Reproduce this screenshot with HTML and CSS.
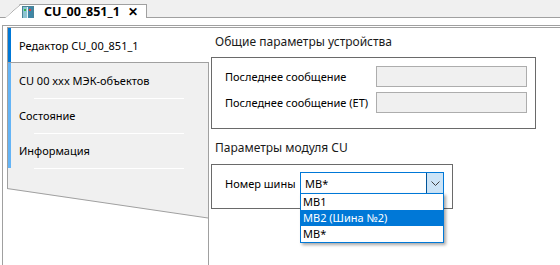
FILE: index.html
```html
<!DOCTYPE html>
<html>
<head>
<meta charset="utf-8">
<link rel="stylesheet" href="styles.css">
</head>
<body>
<div class="app">
  <div class="tabstrip">
    <div class="tab">
      <svg class="tab-icon" width="12" height="13" viewBox="0 0 12 13">
        <rect x="0" y="0" width="6" height="13" fill="#8cc4d2"/>
        <rect x="6" y="0" width="6" height="13" fill="#3f86a6"/>
        <rect x="5" y="0" width="1" height="13" fill="#e6f4f8"/>
        <rect x="0.5" y="0.5" width="11" height="12" fill="none" stroke="#4a8296"/>
        <rect x="2" y="3" width="2" height="2" fill="#2fb84a"/>
        <rect x="7" y="3" width="2" height="2" fill="#e23c3c"/>
      </svg>
      <span class="tab-title">CU_00_851_1</span>
      <span class="tab-close">✕</span>
    </div>
  </div>
  <div class="frame">
    <div class="panel">
      <div class="nav">
        <div class="nav-item selected"><span>Редактор CU_00_851_1</span></div>
        <div class="nav-item"><span>CU 00 xxx МЭК-объектов</span></div>
        <div class="nav-item"><span>Состояние</span></div>
        <div class="nav-item"><span>Информация</span></div>
        <div class="nav-tail"></div>
        <svg class="nav-slant" width="202" height="41" viewBox="0 0 202 41"><polygon points="0,0 201,0 201,40 0,11" fill="#f0f0f0"/><line x1="0.5" y1="0" x2="0.5" y2="11" stroke="#a0a0a0"/><line x1="0" y1="10.5" x2="201" y2="40" stroke="#a0a0a0"/><line x1="201.5" y1="0" x2="201.5" y2="41" stroke="#a0a0a0"/></svg>
        <div class="nav-fill"></div>
      </div>
      <div class="content">
        <div class="section-title">Общие параметры устройства</div>
        <div class="group group-general">
          <div class="row"><span class="label">Последнее сообщение</span><div class="field"></div></div>
          <div class="row"><span class="label">Последнее сообщение (ET)</span><div class="field"></div></div>
        </div>
        <div class="section-title second">Параметры модуля CU</div>
        <div class="group group-cu">
          <div class="row">
            <span class="label">Номер шины</span>
            <div class="combo-wrap">
              <div class="combo">
                <span class="combo-value">MB*</span>
                <div class="combo-btn"><svg width="9" height="5" viewBox="0 0 9 5"><polyline points="0.5,0.5 4.5,4.5 8.5,0.5" fill="none" stroke="#404040" stroke-width="1"/></svg></div>
              </div>
              <div class="dropdown">
                <div class="opt">MB1</div>
                <div class="opt active">MB2 (Шина №2)</div>
                <div class="opt">MB*</div>
              </div>
            </div>
          </div>
        </div>
      </div>
    </div>
  </div>
</div>
</body>
</html>
```
FILE: styles.css
```css
* { box-sizing: border-box; }
html, body { margin: 0; padding: 0; background: #fff; }
body {
  font-family: "Noto Sans", "Open Sans", sans-serif;
  font-size: 11px;
  color: #000;
  width: 560px;
  height: 265px;
  overflow: hidden;
}
.app { display: flex; flex-direction: column; height: 265px; }

.tabstrip {
  height: 18px;
  background: #f0f0f0;
  border-bottom: 1px solid #a0a0a0;
  display: flex;
  align-items: flex-end;
  flex: none;
}
.tab {
  flex: none;
  margin-left: 5px;
  margin-bottom: -1px;
  width: 142px;
  height: 14px;
  padding-left: 17px;
  border-top: 1px solid #a0a0a0;
  border-right: 1px solid #a0a0a0;
  background:
    linear-gradient(to bottom right, transparent calc(50% - 0.7px), #a0a0a0 50%, transparent calc(50% + 0.7px)) 0 -1px / 16px 14px no-repeat,
    #fff;
  clip-path: polygon(15px 0, 100% 0, 100% 100%, 0 100%);
  display: flex;
  align-items: flex-start;
  white-space: nowrap;
}
.tab-icon { display: block; width: 12px; height: 13px; margin-top: 1px; flex: none; }
.tab-title {
  font-weight: bold;
  font-size: 12.5px;
  margin-left: 10px;
  line-height: 13px;
  flex: none;
}
.tab-close { font-weight: bold; font-size: 12px; margin-left: 8px; line-height: 13px; flex: none; }

.frame {
  flex: 1;
  margin-top: 7px;
  margin-left: 2px;
  border-top: 1px solid #a0a0a0;
  border-left: 1px solid #a0a0a0;
  padding-top: 1px;
  padding-left: 4px;
  display: flex;
}
.panel {
  flex: 1;
  border-top: 1px solid #a0a0a0;
  display: flex;
}
.nav {
  width: 202px;
  flex: none;
  display: flex;
  flex-direction: column;
}
.nav-item {
  height: 35px;
  display: flex;
  align-items: center;
  background: #f0f0f0;
  border-left: 1px solid #a0a0a0;
  border-right: 1px solid #a0a0a0;
  padding-left: 10px;
  position: relative;
  white-space: nowrap;
}
.nav-item::before {
  content: "";
  width: 3px;
  align-self: stretch;
  background: #64b4f6;
  margin-left: -10px;
  margin-right: 8px;
}
.nav-item::after {
  content: "";
  position: absolute;
  left: 26px;
  width: 150px;
  bottom: -1px;
  height: 1px;
  background: #fff;
  z-index: 1;
}
.nav-item.selected {
  background: #fff;
  border-right: none;
  border-bottom: 1px solid #a0a0a0;
}
.nav-item.selected::before { background: #0078d7; }
.nav-item.selected::after { display: none; }
.nav-tail {
  height: 10px;
  background: #f0f0f0;
  border-left: 1px solid #a0a0a0;
  border-right: 1px solid #a0a0a0;
}
.nav-slant { display: block; flex: none; }
.nav-fill { flex: 1; border-right: 1px solid #a0a0a0; margin-left: 200px; }

.content {
  flex: 1;
  padding-left: 2px;
  display: flex;
  flex-direction: column;
  align-items: flex-start;
  white-space: nowrap;
}
.section-title {
  font-size: 12px;
  color: #1a1a1a;
  margin-left: 4px;
  margin-top: 5px;
  height: 24px;
  line-height: 18px;
}
.section-title.second { margin-top: 11px; height: 24px; line-height: 16px; }
.group {
  border: 1px solid #6a6a6a;
  padding-left: 13px;
  display: flex;
  flex-direction: column;
}
.group-general { width: 325px; height: 72px; padding-top: 8px; gap: 5px; }
.group-cu { width: 242px; height: 45px; padding-top: 7px; }
.row { display: flex; align-items: center; }
.label { font-size: 11px; }
.group-general .label { width: 151px; }
.field {
  width: 151px;
  height: 21px;
  background: #f0f0f0;
  border: 1px solid #adadad;
}
.group-cu .label { width: 75px; }
.combo-wrap { position: relative; }
.combo {
  width: 144px;
  height: 22px;
  border: 1px solid #0078d7;
  display: flex;
  align-items: center;
  background: #fff;
}
.combo-value { flex: 1; padding-left: 4px; }
.combo-btn {
  width: 17px;
  height: 20px;
  background: #cce4f7;
  border-left: 1px solid #005499;
  display: flex;
  align-items: center;
  justify-content: center;
}
.dropdown {
  position: absolute;
  left: 0;
  top: 21px;
  width: 144px;
  border: 1px solid #0078d7;
  background: #fff;
  box-shadow: 2px 2px 3px rgba(0,0,0,0.35);
  z-index: 2;
}
.opt { height: 16px; line-height: 16px; padding-left: 2px; }
.opt.active { background: #0078d7; color: #fff; }
```
